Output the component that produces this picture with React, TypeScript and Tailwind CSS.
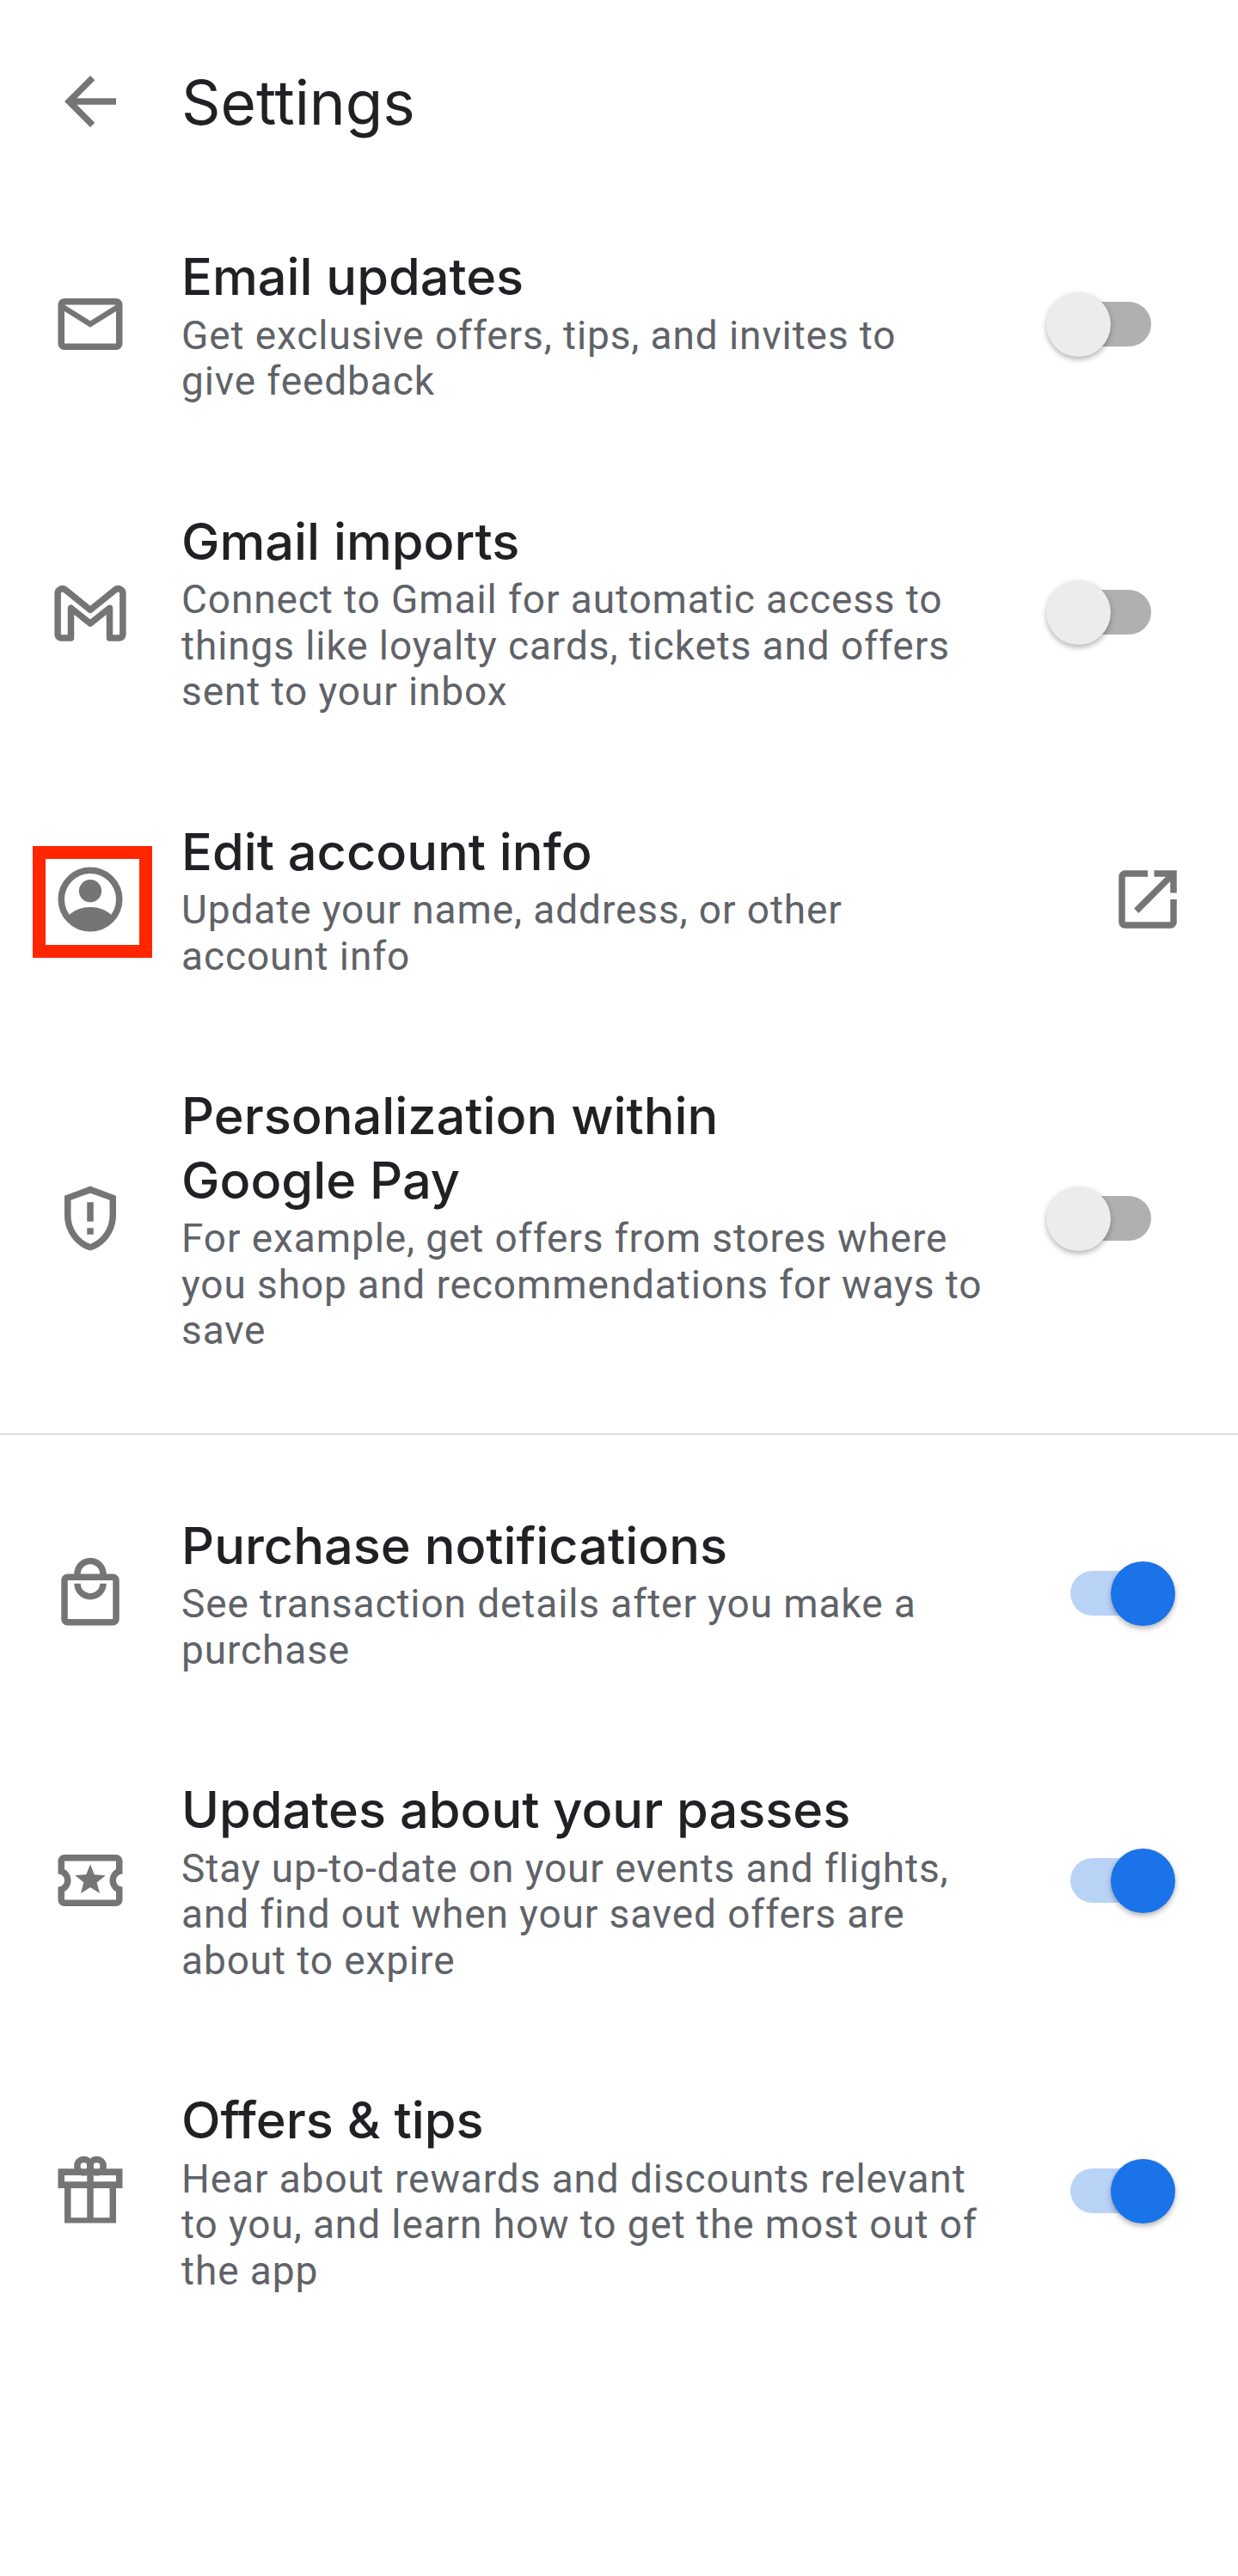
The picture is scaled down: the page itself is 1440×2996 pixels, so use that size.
import type { ReactNode } from "react";

const roboto = "font-['Roboto',sans-serif]";
const heading = "font-['Inter',sans-serif]";

function Icon({ d }: { d: string }) {
  return (
    <svg viewBox="0 0 24 24" className="h-[90px] w-[90px] fill-[#757575]">
      <path d={d} fillRule="evenodd" />
    </svg>
  );
}

const mailIcon = (
  <Icon d="M20 4H4c-1.100 0-2 .9-2 2v12c0 1.100.9 2 2 2h16c1.100 0 2-.9 2-2V6c0-1.100-.9-2-2-2zm0 14H4V8l8 5 8-5v10zm-8-7L4 6h16l-8 5z" />
);

const gmailIcon = (
  <svg viewBox="0 0 24 24" className="h-[90px] w-[90px] fill-none stroke-[#757575] stroke-2">
    <path
      d="M6 20H3c-.6 0-1.100-.5-1.100-1.100V6.200c0-1.200 1.400-1.900 2.300-1.200L12 11.300 19.800 5c.9-.7 2.300 0 2.300 1.200v12.700c0 .6-.5 1.100-1.100 1.100h-3v-9.300l-6 4.800-6-4.800V20z"
      strokeLinejoin="round"
    />
  </svg>
);

const accountIcon = (
  <svg viewBox="0 0 24 24" className="h-[90px] w-[90px] fill-[#757575]">
    <circle cx="12" cy="12" r="9" className="fill-none stroke-[#757575] stroke-2" />
    <circle cx="12" cy="9.400" r="3.500" />
    <path d="M5.400 16.900C7 15.300 9.300 14.400 12 14.400s5 .9 6.600 2.500C17 19.300 14.700 20.500 12 20.500s-5-1.200-6.600-3.600z" />
  </svg>
);

const shieldIcon = (
  <Icon d="M12 2L4 5v6.090c0 5.050 3.410 9.760 8 10.910 4.590-1.150 8-5.860 8-10.910V5l-8-3zm6 9.090c0 4-2.550 7.700-6 8.830-3.450-1.130-6-4.820-6-8.830V6.310l6-2.120 6 2.120v4.780zM11 7h2v6h-2V7zm0 8h2v2h-2v-2z" />
);

const bagIcon = (
  <Icon d="M19 6h-2c0-2.760-2.240-5-5-5S7 3.240 7 6H5c-1.100 0-2 .9-2 2v12c0 1.100.9 2 2 2h14c1.100 0 2-.9 2-2V8c0-1.100-.9-2-2-2zm-7-3c1.660 0 3 1.340 3 3H9c0-1.660 1.340-3 3-3zm7 17H5V8h14v12zm-7-8c-1.660 0-3-1.340-3-3H7c0 2.760 2.240 5 5 5s5-2.240 5-5h-2c0 1.660-1.340 3-3 3z" />
);

const ticketIcon = (
  <Icon d="M22 10V6c0-1.110-.9-2-2-2H4c-1.100 0-1.990.89-1.990 2v4c1.100 0 1.990.9 1.990 2s-.89 2-2 2v4c0 1.100.9 2 2 2h16c1.100 0 2-.9 2-2v-4c-1.100 0-2-.9-2-2s.9-2 2-2zm-2-1.460c-1.190.69-2 1.990-2 3.460s.81 2.770 2 3.460V18H4v-2.540c1.190-.69 2-1.990 2-3.460 0-1.480-.8-2.770-1.990-3.460L4 6h16v2.540zM9.070 16L12 14.120 14.930 16l-.89-3.360 2.690-2.200-3.470-.21L12 7l-1.270 3.220-3.470.21 2.690 2.200z" />
);

const giftIcon = (
  <svg viewBox="0 0 24 24" className="h-[90px] w-[90px] fill-[#757575]">
    <circle cx="10" cy="4.300" r="2.050" className="fill-none stroke-[#757575] stroke-2" />
    <circle cx="14" cy="4.300" r="2.050" className="fill-none stroke-[#757575] stroke-2" />
    <path
      fillRule="evenodd"
      d="M2 5.100h20v6.100h-2V22H4V11.200H2V5.100zM4 7.200v1.900h7V7.200H4zm9 0v1.900h7V7.200h-7zM6 11.200v9.100h5v-9.100H6zm7 0v9.100h5v-9.100h-5z"
    />
  </svg>
);

function Toggle({ on }: { on: boolean }) {
  return (
    <div className="relative ml-[94px] h-[52px] w-[94px]">
      <div className={`h-full w-full rounded-full ${on ? "bg-[#b9d3f7]" : "bg-[#b0b0b0]"}`} />
      <div
        className={`absolute top-[-11px] h-[75px] w-[75px] rounded-full shadow-[0_3px_6px_rgba(0,0,0,0.3)] ${
          on ? "right-[-28px] bg-[#1a73e8]" : "left-[-28px] bg-[#ececec]"
        }`}
      />
    </div>
  );
}

function ExternalLink() {
  return (
    <svg viewBox="0 0 24 24" className="ml-[139px] h-[90px] w-[90px] fill-[#757575]">
      <path d="M19 19H5V5h7V3H5c-1.110 0-2 .9-2 2v14c0 1.100.89 2 2 2h14c1.100 0 2-.9 2-2v-7h-2v7zM14 3v2h3.590l-9.830 9.830 1.410 1.410L19 6.410V10h2V3h-7z" />
    </svg>
  );
}

type Row = {
  icon: ReactNode;
  title: string;
  desc: string;
  control: "on" | "off" | "link";
  boxed?: boolean;
};

const topRows: Row[] = [
  { icon: mailIcon, title: "Email updates", desc: "Get exclusive offers, tips, and invites to\ngive feedback", control: "off" },
  { icon: gmailIcon, title: "Gmail imports", desc: "Connect to Gmail for automatic access to things like loyalty cards, tickets and offers sent to your inbox", control: "off" },
  { icon: accountIcon, title: "Edit account info", desc: "Update your name, address, or other account info", control: "link", boxed: true },
  { icon: shieldIcon, title: "Personalization within\nGoogle Pay", desc: "For example, get offers from stores where you shop and recommendations for ways to save", control: "off" },
];

const bottomRows: Row[] = [
  { icon: bagIcon, title: "Purchase notifications", desc: "See transaction details after you make a purchase", control: "on" },
  { icon: ticketIcon, title: "Updates about your passes", desc: "Stay up-to-date on your events and flights, and find out when your saved offers are about to expire", control: "on" },
  { icon: giftIcon, title: "Offers & tips", desc: "Hear about rewards and discounts relevant to you, and learn how to get the most out of the app", control: "on" },
];

function SettingRow({ row }: { row: Row }) {
  return (
    <div className="flex items-center pl-[60px]">
      <div className="relative flex h-[90px] w-[151px] shrink-0 items-center">
        {row.icon}
        {row.boxed && (
          <div className="absolute left-[-22px] top-[-17px] h-[130px] w-[139px] border-[15px] border-[#ff2600]" />
        )}
      </div>
      <div className="w-[940px] shrink-0">
        <div className={`whitespace-pre-line text-[59.5px] leading-[74.5px] font-medium text-[#202124] ${heading}`}>
          {row.title}
        </div>
        <div className={`whitespace-pre-line pt-[5px] text-[46px] leading-[53.5px] tracking-[0.9px] text-[#5f6368] ${roboto}`}>
          {row.desc}
        </div>
      </div>
      <div className="flex flex-1 justify-start">
        {row.control === "link" ? <ExternalLink /> : <Toggle on={row.control === "on"} />}
      </div>
    </div>
  );
}

export default function App() {
  return (
    <div className="min-h-[2996px] w-[1440px] bg-white">
      <header className="flex h-[236px] items-center pl-[60px]">
        <svg viewBox="0 0 24 24" className="h-[90px] w-[90px] fill-[#757575]">
          <path d="M20 11H7.830l5.590-5.590L12 4l-8 8 8 8 1.410-1.410L7.830 13H20v-2z" />
        </svg>
        <h1 className={`ml-[61px] pt-[2px] text-[71px] font-normal text-[#202124] ${heading}`}>Settings</h1>
      </header>
      <div className="flex flex-col gap-[121px] pt-[48px] pb-[92px]">
        {topRows.map((row) => (
          <SettingRow key={row.title} row={row} />
        ))}
      </div>
      <div className="h-[2px] bg-[#dadce0]" />
      <div className="flex flex-col gap-[121px] pt-[91px]">
        {bottomRows.map((row) => (
          <SettingRow key={row.title} row={row} />
        ))}
      </div>
    </div>
  );
}
